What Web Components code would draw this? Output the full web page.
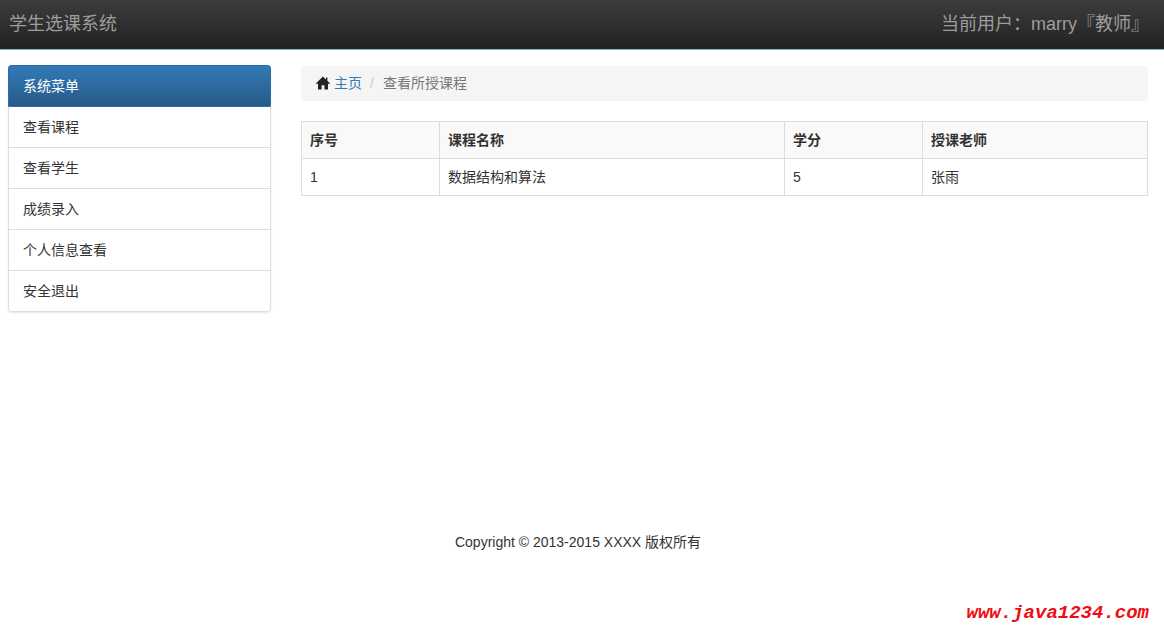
<!DOCTYPE html>
<html lang="zh">
<head>
<meta charset="utf-8">
<title>学生选课系统</title>
<style>
  html, body { margin: 0; padding: 0; background: #fff; }
  body {
    font: 14px/20px "Liberation Sans", "Noto Sans CJK SC", sans-serif;
    color: #333;
  }
</style>
</head>
<body>
<app-navbar>
  <span slot="brand">学生选课系统</span>
  <span slot="user">当前用户：marry『教师』</span>
</app-navbar>
<app-layout>
  <side-menu slot="side" title="系统菜单">
    <menu-item>查看课程</menu-item>
    <menu-item>查看学生</menu-item>
    <menu-item>成绩录入</menu-item>
    <menu-item>个人信息查看</menu-item>
    <menu-item>安全退出</menu-item>
  </side-menu>
  <bread-crumb current="查看所授课程">主页</bread-crumb>
  <course-table></course-table>
</app-layout>
<app-footer>Copyright © 2013-2015 XXXX 版权所有</app-footer>
<water-mark>www.java1234.com</water-mark>

<script>
  class AppNavbar extends HTMLElement {
    constructor() {
      super();
      this.attachShadow({ mode: 'open' }).innerHTML = `
        <style>
          :host {
            display: flex;
            justify-content: space-between;
            align-items: center;
            box-sizing: border-box;
            height: 50px;
            padding: 0 15px 2px 9px;
            background: linear-gradient(to bottom, #3c3c3c 0, #222 100%);
            border-bottom: 1px solid #86b8c4;
            box-shadow: 0 1px 0 #effbfc;
            font-size: 18px;
            color: #9d9d9d;
          }
        </style>
        <slot name="brand"></slot>
        <slot name="user"></slot>`;
    }
  }

  class AppLayout extends HTMLElement {
    constructor() {
      super();
      this.attachShadow({ mode: 'open' }).innerHTML = `
        <style>
          :host {
            display: flex;
            gap: 30px;
            box-sizing: border-box;
            height: 461px;
            padding: 15px 16px 0 8px;
          }
          .side { flex: 0 0 263px; }
          .main { flex: 1; min-width: 0; padding-top: 1px; }
        </style>
        <div class="side"><slot name="side"></slot></div>
        <div class="main"><slot></slot></div>`;
    }
  }

  class SideMenu extends HTMLElement {
    constructor() {
      super();
      this.attachShadow({ mode: 'open' }).innerHTML = `
        <style>
          :host {
            display: block;
            border-radius: 4px;
            background: #fff;
            box-shadow: 0 1px 2px rgba(0,0,0,.1);
          }
          .heading {
            box-sizing: border-box;
            height: 42px;
            padding: 10px 14px;
            color: #fff;
            background: linear-gradient(to bottom, #337ab7 0, #265a88 100%);
            border: 1px solid #2e6da4;
            border-radius: 3px 3px 0 0;
          }
          .body { border-radius: 0 0 4px 4px; overflow: hidden; }
        </style>
        <div class="heading"></div>
        <div class="body"><slot></slot></div>`;
      this.shadowRoot.querySelector('.heading').textContent = this.getAttribute('title');
    }
  }

  class MenuItem extends HTMLElement {
    constructor() {
      super();
      this.attachShadow({ mode: 'open' }).innerHTML = `
        <style>
          :host {
            display: block;
            box-sizing: border-box;
            height: 41px;
            padding: 10px 14px;
            border: 1px solid #ddd;
            border-top: 0;
            color: #333;
          }
          :host(:last-child) { border-radius: 0 0 4px 4px; }
        </style>
        <slot></slot>`;
    }
  }

  class BreadCrumb extends HTMLElement {
    constructor() {
      super();
      this.attachShadow({ mode: 'open' }).innerHTML = `
        <style>
          :host {
            display: flex;
            align-items: center;
            box-sizing: border-box;
            height: 35px;
            padding: 0 15px 2px;
            margin-bottom: 20px;
            background: #f5f5f5;
            border-radius: 4px;
          }
          svg { width: 14px; height: 14px; margin-right: 4px; flex: none; }
          a { color: #337ab7; text-decoration: none; }
          .sep { color: #ccc; padding: 0 9px 0 8px; }
          .cur { color: #777; }
        </style>
        <svg viewBox="0 0 14 14"><path fill="#222" d="M7 .6 0 7.2l.9 1L2 7.2V13.6h3.6V9.2h2.8v4.4H12V7.2l1.1 1 .9-1-2.6-2.4V1.4H10v2.1Z"/></svg>
        <a href="#"><slot></slot></a>
        <span class="sep">/</span>
        <span class="cur"></span>`;
      this.shadowRoot.querySelector('.cur').textContent = this.getAttribute('current');
    }
  }

  class CourseTable extends HTMLElement {
    constructor() {
      super();
      this.attachShadow({ mode: 'open' }).innerHTML = `
        <style>
          :host { display: block; }
          table {
            width: 100%;
            table-layout: fixed;
            border-collapse: collapse;
            color: #333;
          }
          th, td {
            box-sizing: border-box;
            height: 37px;
            padding: 8px;
            text-align: left;
            border: 1px solid #ddd;
          }
          thead tr { background: #f9f9f9; }
        </style>
        <table>
          <colgroup>
            <col style="width:138px"><col style="width:345px"><col style="width:138px"><col>
          </colgroup>
          <thead>
            <tr><th>序号</th><th>课程名称</th><th>学分</th><th>授课老师</th></tr>
          </thead>
          <tbody>
            <tr><td>1</td><td>数据结构和算法</td><td>5</td><td>张雨</td></tr>
          </tbody>
        </table>`;
    }
  }

  class AppFooter extends HTMLElement {
    constructor() {
      super();
      this.attachShadow({ mode: 'open' }).innerHTML = `
        <style>
          :host {
            display: block;
            height: 60px;
            padding-top: 21px;
            box-sizing: border-box;
            text-align: center;
            margin-left: -8px;
            color: #333;
          }
        </style>
        <slot></slot>`;
    }
  }

  class WaterMark extends HTMLElement {
    constructor() {
      super();
      this.attachShadow({ mode: 'open' }).innerHTML = `
        <style>
          :host {
            display: block;
            padding-top: 32px;
            padding-right: 15px;
            text-align: right;
            font: italic bold 19px/20px "Liberation Mono", monospace;
            color: #ee0d12;
          }
        </style>
        <slot></slot>`;
    }
  }

  customElements.define('app-navbar', AppNavbar);
  customElements.define('app-layout', AppLayout);
  customElements.define('side-menu', SideMenu);
  customElements.define('menu-item', MenuItem);
  customElements.define('bread-crumb', BreadCrumb);
  customElements.define('course-table', CourseTable);
  customElements.define('app-footer', AppFooter);
  customElements.define('water-mark', WaterMark);
</script>
</body>
</html>
